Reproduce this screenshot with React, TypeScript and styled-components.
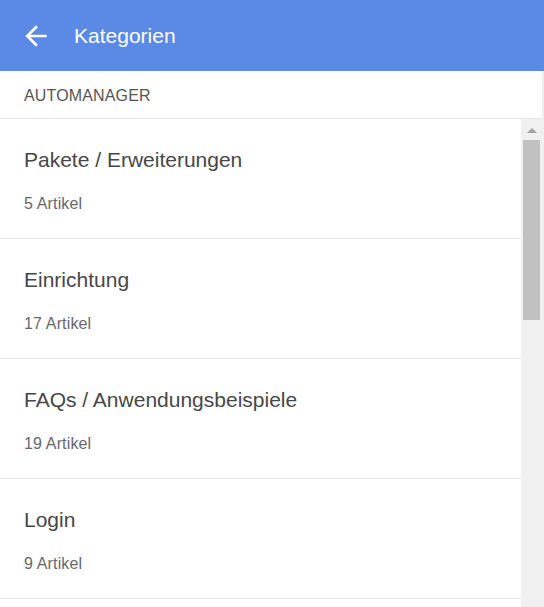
import React from "react";
import styled, { createGlobalStyle } from "styled-components";

const GlobalStyle = createGlobalStyle`
  html, body { margin: 0; padding: 0; background: #eeeeee; }
  body { font-family: "Liberation Sans", Arial, sans-serif; }
  * { box-sizing: border-box; }
`;

const Page = styled.div`
  width: 544px;
  height: 607px;
  display: flex;
  flex-direction: column;
  background: #eeeeee;
  overflow: hidden;
`;

const Header = styled.header`
  height: 71px;
  flex: none;
  display: flex;
  align-items: center;
  gap: 22px;
  padding-left: 20px;
  background: #5b89e6;
  color: #ffffff;
`;

const BackButton = styled.button`
  width: 32px;
  height: 32px;
  padding: 0;
  border: none;
  background: transparent;
  display: flex;
  align-items: center;
  justify-content: center;
  color: #ffffff;
  cursor: pointer;
`;

const Title = styled.h1`
  margin: 0;
  font-size: 21px;
  font-weight: 400;
  line-height: 24px;
`;

const SubHeader = styled.div`
  width: 542px;
  flex: none;
  padding: 15px 24px 12px;
  background: #ffffff;
  border-bottom: 1px solid #e6e6e6;
  font-size: 16px;
  line-height: 20px;
  color: #555555;
  letter-spacing: 0.15px;
  text-transform: uppercase;
`;

const Body = styled.div`
  flex: 1;
  display: flex;
  min-height: 0;
`;

const List = styled.ul`
  flex: 1;
  margin: 0;
  padding: 0;
  list-style: none;
  background: #ffffff;
  overflow: hidden;
`;

const Item = styled.li`
  padding: 29px 24px 24px;
  border-bottom: 1px solid #e6e6e6;
  display: flex;
  flex-direction: column;
  gap: 22px;
`;

const ItemTitle = styled.div`
  font-size: 21px;
  line-height: 24px;
  color: #474747;
`;

const ItemCount = styled.div`
  font-size: 16px;
  line-height: 20px;
  color: #686868;
  letter-spacing: 0.15px;
`;

const ScrollTrack = styled.div`
  width: 23px;
  flex: none;
  background: #f0f0f0;
  display: flex;
  flex-direction: column;
  align-items: center;
  padding: 9px 2px 0 2px;
`;

const ArrowUp = styled.div`
  width: 0;
  height: 0;
  border-left: 5px solid transparent;
  border-right: 5px solid transparent;
  border-bottom: 5px solid #a3a3a3;
  margin-left: -2px;
`;

const Thumb = styled.div`
  margin-top: 7px;
  width: 17px;
  align-self: flex-start;
  height: 180px;
  background: #c1c1c1;
`;

const categories = [
  { title: "Pakete / Erweiterungen", count: 5 },
  { title: "Einrichtung", count: 17 },
  { title: "FAQs / Anwendungsbeispiele", count: 19 },
  { title: "Login", count: 9 },
];

export default function App() {
  return (
    <>
      <GlobalStyle />
      <Page>
        <Header>
          <BackButton aria-label="Zurück">
            <svg width="32" height="32" viewBox="0 0 24 24" fill="currentColor">
              <path d="M20 11H7.83l5.59-5.59L12 4l-8 8 8 8 1.41-1.41L7.83 13H20v-2z" />
            </svg>
          </BackButton>
          <Title>Kategorien</Title>
        </Header>
        <SubHeader>Automanager</SubHeader>
        <Body>
          <List>
            {categories.map((c) => (
              <Item key={c.title}>
                <ItemTitle>{c.title}</ItemTitle>
                <ItemCount>{c.count} Artikel</ItemCount>
              </Item>
            ))}
          </List>
          <ScrollTrack>
            <ArrowUp />
            <Thumb />
          </ScrollTrack>
        </Body>
      </Page>
    </>
  );
}
